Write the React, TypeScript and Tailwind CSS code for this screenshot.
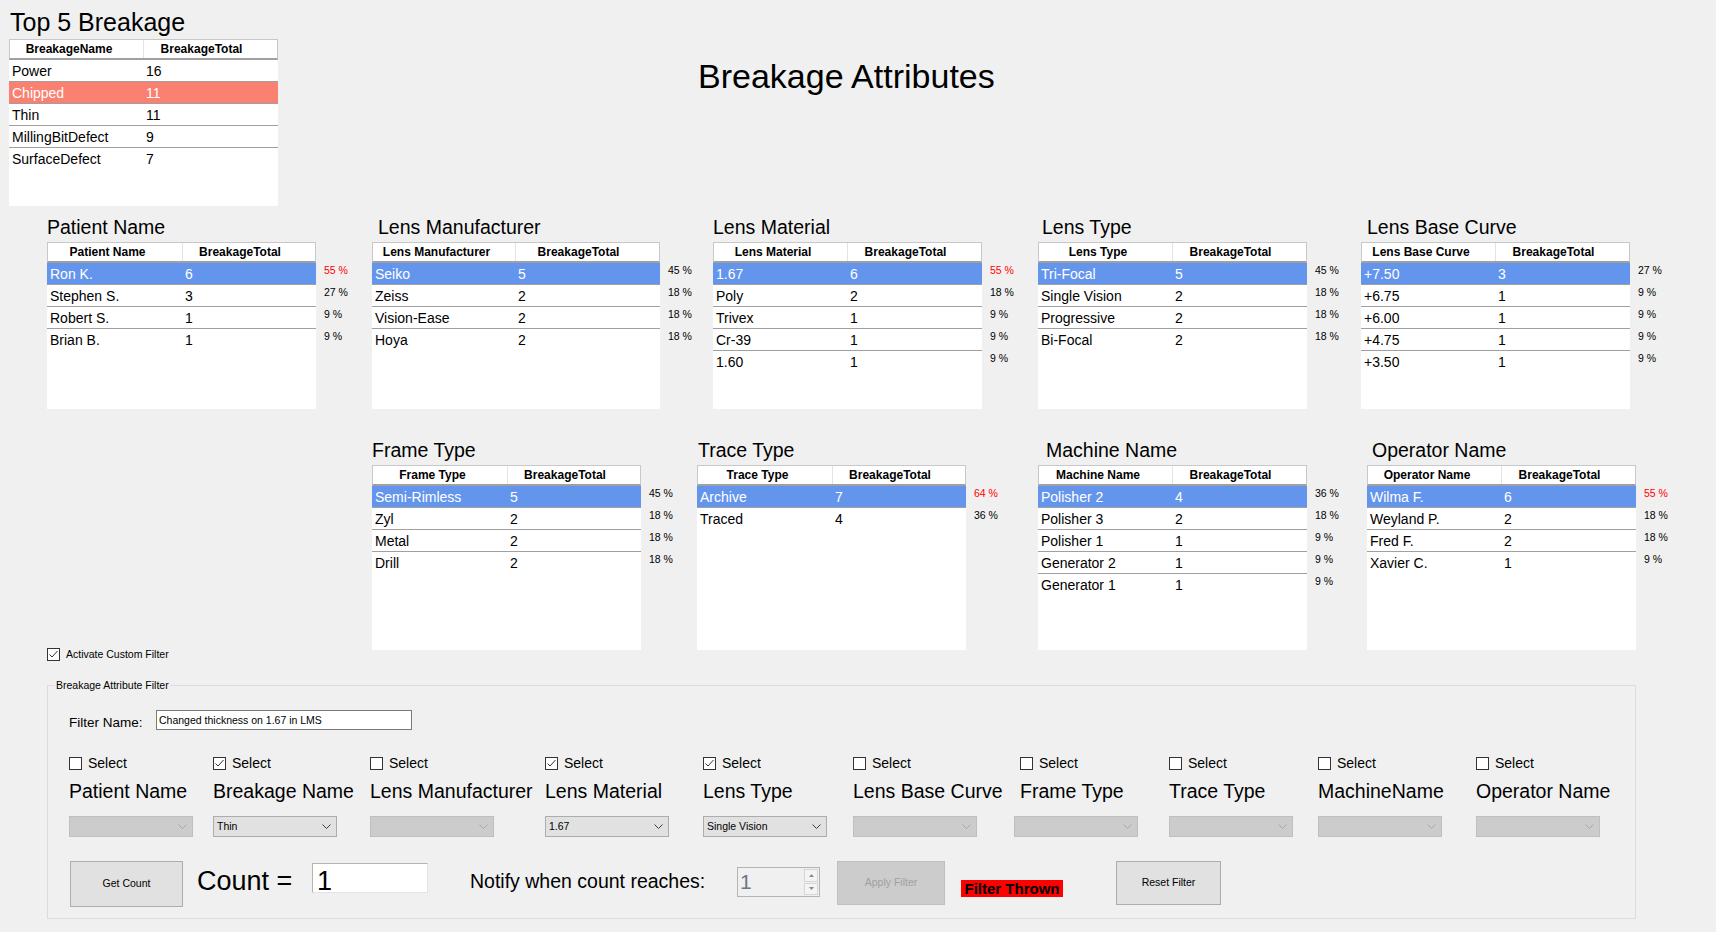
import React from "react";

type R = [string, string, string?, boolean?];

function Grid({
  head,
  rows,
  col1,
  h,
  selBg,
  sel,
  w,
}: {
  head: string;
  rows: R[];
  col1: string;
  h: string;
  selBg: string;
  sel: number;
  w: string;
}) {
  return (
    <div className={`${w} ${h} bg-white shrink-0`}>
      <div className="flex h-[21px] border-t border-l border-r border-[#c8c8c8] border-b-2 border-b-[#a0a0a0] text-[12px] font-bold leading-[18px] text-black">
        <div className={`${col1} shrink-0 border-r border-[#e3e3e3] text-center pr-[15px] whitespace-nowrap`}>
          {head}
        </div>
        <div className="flex-1 text-center pr-[18px] whitespace-nowrap">BreakageTotal</div>
      </div>
      {rows.map((r, i) => (
        <div
          key={i}
          className={`flex h-[22px] border-b text-[14px] leading-[22px] ${
            i < rows.length - 1 ? "border-[#a0a0a0]" : "border-transparent"
          } ${i === sel ? selBg + " text-white" : "text-black"}`}
        >
          <div className={`${col1} shrink-0 pl-[3px] whitespace-nowrap`}>{r[0]}</div>
          <div className="flex-1 pl-[3px]">{r[1]}</div>
        </div>
      ))}
    </div>
  );
}

function Pct({ rows }: { rows: R[] }) {
  return (
    <div className="ml-[8px] pt-[17px] text-[10.5px] leading-[22px] whitespace-nowrap">
      {rows.map((r, i) => (
        <div key={i} className={r[3] ? "text-[#ff0000]" : "text-black"}>
          {r[2]}
        </div>
      ))}
    </div>
  );
}

function Panel({
  title,
  rows,
  width,
  titleCls,
  gridW,
  col1,
  gridH,
}: {
  title: string;
  rows: R[];
  width: string;
  titleCls: string;
  gridW: string;
  col1: string;
  gridH: string;
}) {
  return (
    <div className={`${width} shrink-0 flex flex-col`}>
      <div className={`text-[19.5px] leading-[22px] h-[22px] whitespace-nowrap ${titleCls}`}>{title}</div>
      <div className="flex items-start">
        <Grid head={title} rows={rows} col1={col1} h={gridH} selBg="bg-[#6495ed]" sel={0} w={gridW} />
        <Pct rows={rows} />
      </div>
    </div>
  );
}

function Check({ checked }: { checked?: boolean }) {
  return (
    <span className="w-[13px] h-[13px] border border-[#333333] bg-white flex items-center justify-center shrink-0">
      {checked && (
        <svg width="11" height="11" viewBox="0 0 11 11">
          <path d="M1.5 5.5 L4 8 L9.5 2" fill="none" stroke="#333333" strokeWidth="1" />
        </svg>
      )}
    </span>
  );
}

function Combo({ value, shift }: { value?: string; shift?: string }) {
  const enabled = !!value;
  return (
    <div
      className={`w-[124px] h-[21px] border flex items-center justify-between ${shift ?? ""} ${
        enabled ? "bg-[#e1e1e1] border-[#adadad]" : "bg-[#cccccc] border-[#bfbfbf]"
      }`}
    >
      <span className="pl-[3px] text-[10.5px] leading-[19px] whitespace-nowrap">{value}</span>
      <svg className="mr-[5px]" width="9" height="6" viewBox="0 0 9 6">
        <path
          d="M0.5 0.5 L4.5 4.5 L8.5 0.5"
          fill="none"
          stroke={enabled ? "#3c3c3c" : "#a8a8a8"}
          strokeWidth="1"
        />
      </svg>
    </div>
  );
}

function FilterCol({
  w,
  label,
  checked,
  value,
  shift,
}: {
  w: string;
  label: string;
  checked?: boolean;
  value?: string;
  shift?: string;
}) {
  return (
    <div className={`${w} shrink-0 flex flex-col`}>
      <div className="flex items-center h-[13px] gap-[6px]">
        <Check checked={checked} />
        <span className="text-[14px] leading-[13px]">Select</span>
      </div>
      <div className="mt-[10px] text-[19.5px] leading-[22px] h-[22px] whitespace-nowrap">{label}</div>
      <div className="mt-[14px]">
        <Combo value={value} shift={shift} />
      </div>
    </div>
  );
}

const top5: R[] = [
  ["Power", "16"],
  ["Chipped", "11"],
  ["Thin", "11"],
  ["MillingBitDefect", "9"],
  ["SurfaceDefect", "7"],
];

const patient: R[] = [
  ["Ron K.", "6", "55 %", true],
  ["Stephen S.", "3", "27 %"],
  ["Robert S.", "1", "9 %"],
  ["Brian B.", "1", "9 %"],
];
const manuf: R[] = [
  ["Seiko", "5", "45 %"],
  ["Zeiss", "2", "18 %"],
  ["Vision-Ease", "2", "18 %"],
  ["Hoya", "2", "18 %"],
];
const material: R[] = [
  ["1.67", "6", "55 %", true],
  ["Poly", "2", "18 %"],
  ["Trivex", "1", "9 %"],
  ["Cr-39", "1", "9 %"],
  ["1.60", "1", "9 %"],
];
const lensType: R[] = [
  ["Tri-Focal", "5", "45 %"],
  ["Single Vision", "2", "18 %"],
  ["Progressive", "2", "18 %"],
  ["Bi-Focal", "2", "18 %"],
];
const baseCurve: R[] = [
  ["+7.50", "3", "27 %"],
  ["+6.75", "1", "9 %"],
  ["+6.00", "1", "9 %"],
  ["+4.75", "1", "9 %"],
  ["+3.50", "1", "9 %"],
];
const frame: R[] = [
  ["Semi-Rimless", "5", "45 %"],
  ["Zyl", "2", "18 %"],
  ["Metal", "2", "18 %"],
  ["Drill", "2", "18 %"],
];
const trace: R[] = [
  ["Archive", "7", "64 %", true],
  ["Traced", "4", "36 %"],
];
const machine: R[] = [
  ["Polisher 2", "4", "36 %"],
  ["Polisher 3", "2", "18 %"],
  ["Polisher 1", "1", "9 %"],
  ["Generator 2", "1", "9 %"],
  ["Generator 1", "1", "9 %"],
];
const operator: R[] = [
  ["Wilma F.", "6", "55 %", true],
  ["Weyland P.", "2", "18 %"],
  ["Fred F.", "2", "18 %"],
  ["Xavier C.", "1", "9 %"],
];

export default function App() {
  return (
    <div className="w-[1716px] h-[932px] bg-[#f0f0f0] overflow-hidden text-black font-['Liberation_Sans',Arial,sans-serif]">
      {/* Header */}
      <div className="flex h-[206px]">
        <div className="ml-[9px] w-[269px] shrink-0 flex flex-col">
          <div className="mt-[8px] h-[28px] text-[25px] leading-[28px] pl-[1px] whitespace-nowrap">Top 5 Breakage</div>
          <div className="mt-[3px]">
            <Grid
              head="BreakageName"
              rows={top5}
              col1="w-[134px]"
              h="h-[167px]"
              selBg="bg-[#fa8072]"
              sel={1}
              w="w-[269px]"
            />
          </div>
        </div>
        <div className="ml-[420px] mt-[57px] h-[39px] text-[34px] leading-[39px] whitespace-nowrap">
          Breakage Attributes
        </div>
      </div>

      {/* Row 1 */}
      <div className="flex mt-[10px] pl-[47px]">
        <Panel title="Patient Name" rows={patient} width="w-[325px]" titleCls="mb-[4px]" gridW="w-[269px]" col1="w-[135px]" gridH="h-[167px]" />
        <Panel title="Lens Manufacturer" rows={manuf} width="w-[341px]" titleCls="mb-[4px] pl-[6px]" gridW="w-[288px]" col1="w-[143px]" gridH="h-[167px]" />
        <Panel title="Lens Material" rows={material} width="w-[325px]" titleCls="mb-[4px]" gridW="w-[269px]" col1="w-[134px]" gridH="h-[167px]" />
        <Panel title="Lens Type" rows={lensType} width="w-[323px]" titleCls="mb-[4px] pl-[4px]" gridW="w-[269px]" col1="w-[134px]" gridH="h-[167px]" />
        <Panel title="Lens Base Curve" rows={baseCurve} width="w-[320px]" titleCls="mb-[4px] pl-[6px]" gridW="w-[269px]" col1="w-[134px]" gridH="h-[167px]" />
      </div>

      {/* Row 2 */}
      <div className="flex mt-[30px] pl-[47px]">
        <div className="w-[325px] shrink-0 self-end mb-[-11px] flex items-center gap-[6px]">
          <Check checked />
          <span className="text-[10.5px] leading-[13px] whitespace-nowrap">Activate Custom Filter</span>
        </div>
        <Panel title="Frame Type" rows={frame} width="w-[325px]" titleCls="mb-[4px]" gridW="w-[269px]" col1="w-[135px]" gridH="h-[185px]" />
        <Panel title="Trace Type" rows={trace} width="w-[341px]" titleCls="mb-[4px] pl-[1px]" gridW="w-[269px]" col1="w-[135px]" gridH="h-[185px]" />
        <Panel title="Machine Name" rows={machine} width="w-[329px]" titleCls="mb-[4px] pl-[8px]" gridW="w-[269px]" col1="w-[134px]" gridH="h-[185px]" />
        <Panel title="Operator Name" rows={operator} width="w-[320px]" titleCls="mb-[4px] pl-[5px]" gridW="w-[269px]" col1="w-[134px]" gridH="h-[185px]" />
      </div>

      {/* Filter group */}
      <fieldset className="ml-[47px] mt-[29px] w-[1589px] h-[240px] border border-[#dcdcdc]">
        <legend className="ml-[7px] px-[1px] text-[10.5px] leading-[13px]">Breakage Attribute Filter</legend>
        <div className="flex items-start mt-[18px] ml-[21px] h-[20px]">
          <span className="w-[87px] mt-[3px] text-[13.5px] leading-[20px] whitespace-nowrap">Filter Name:</span>
          <div className="w-[256px] h-[20px] bg-white border border-[#7a7a7a] text-[10.5px] leading-[18px] pl-[2px] whitespace-nowrap">
            Changed thickness on 1.67 in LMS
          </div>
        </div>

        <div className="flex mt-[27px] ml-[21px]">
          <FilterCol w="w-[144px]" label="Patient Name" />
          <FilterCol w="w-[157px]" label="Breakage Name" checked value="Thin" />
          <FilterCol w="w-[175px]" label="Lens Manufacturer" />
          <FilterCol w="w-[158px]" label="Lens Material" checked value="1.67" />
          <FilterCol w="w-[150px]" label="Lens Type" checked value="Single Vision" />
          <FilterCol w="w-[167px]" label="Lens Base Curve" />
          <FilterCol w="w-[149px]" label="Frame Type" shift="ml-[-6px]" />
          <FilterCol w="w-[149px]" label="Trace Type" />
          <FilterCol w="w-[158px]" label="MachineName" />
          <FilterCol w="w-[150px]" label="Operator Name" />
        </div>

        <div className="flex items-start mt-[24px] ml-[22px]">
          <div className="w-[113px] h-[46px] shrink-0 bg-[#e1e1e1] border border-[#adadad] flex items-center justify-center text-[10.5px]">
            Get Count
          </div>
          <div className="ml-[14px] w-[115px] shrink-0 mt-[5px] text-[27px] leading-[31px] whitespace-nowrap">Count =</div>
          <div className="w-[116px] h-[30px] mt-[2px] shrink-0 bg-white border border-[#e3e3e3] border-t-[#b4b4b4] border-l-[#b4b4b4] text-[27px] leading-[22px] pt-[6px] pl-[4px]">
            1
          </div>
          <div className="ml-[42px] w-[267px] shrink-0 mt-[9px] text-[19.5px] leading-[23px] whitespace-nowrap">
            Notify when count reaches:
          </div>
          <div className="w-[83px] h-[30px] mt-[6px] shrink-0 border border-[#b4b4b4] bg-[#f0f0f0] flex items-center justify-between">
            <span className="pl-[2px] text-[21px] leading-[26px] text-[#6f7786]">1</span>
            <div className="mr-[1px] w-[14px] h-[26px] flex flex-col gap-[1px]">
              <div className="flex-1 border border-[#d6d6d6] bg-[#f4f4f4] flex items-center justify-center">
                <svg width="5" height="3" viewBox="0 0 5 3">
                  <path d="M0 3 L2.5 0 L5 3 Z" fill="#8a8a8a" />
                </svg>
              </div>
              <div className="flex-1 border border-[#d6d6d6] bg-[#f4f4f4] flex items-center justify-center">
                <svg width="5" height="3" viewBox="0 0 5 3">
                  <path d="M0 0 L2.5 3 L5 0 Z" fill="#8a8a8a" />
                </svg>
              </div>
            </div>
          </div>
          <div className="ml-[17px] w-[108px] h-[44px] shrink-0 bg-[#cccccc] border border-[#bfbfbf] flex items-center justify-center text-[10.5px] text-[#a0a0a0]">
            Apply Filter
          </div>
          <div className="ml-[16px] mt-[19px] w-[102px] h-[17px] shrink-0 bg-[#ff0000] text-center font-bold text-[15px] leading-[17px] whitespace-nowrap">
            Filter Thrown
          </div>
          <div className="ml-[53px] w-[105px] h-[44px] shrink-0 bg-[#e1e1e1] border border-[#adadad] flex items-center justify-center text-[10.5px]">
            Reset Filter
          </div>
        </div>
      </fieldset>
    </div>
  );
}
